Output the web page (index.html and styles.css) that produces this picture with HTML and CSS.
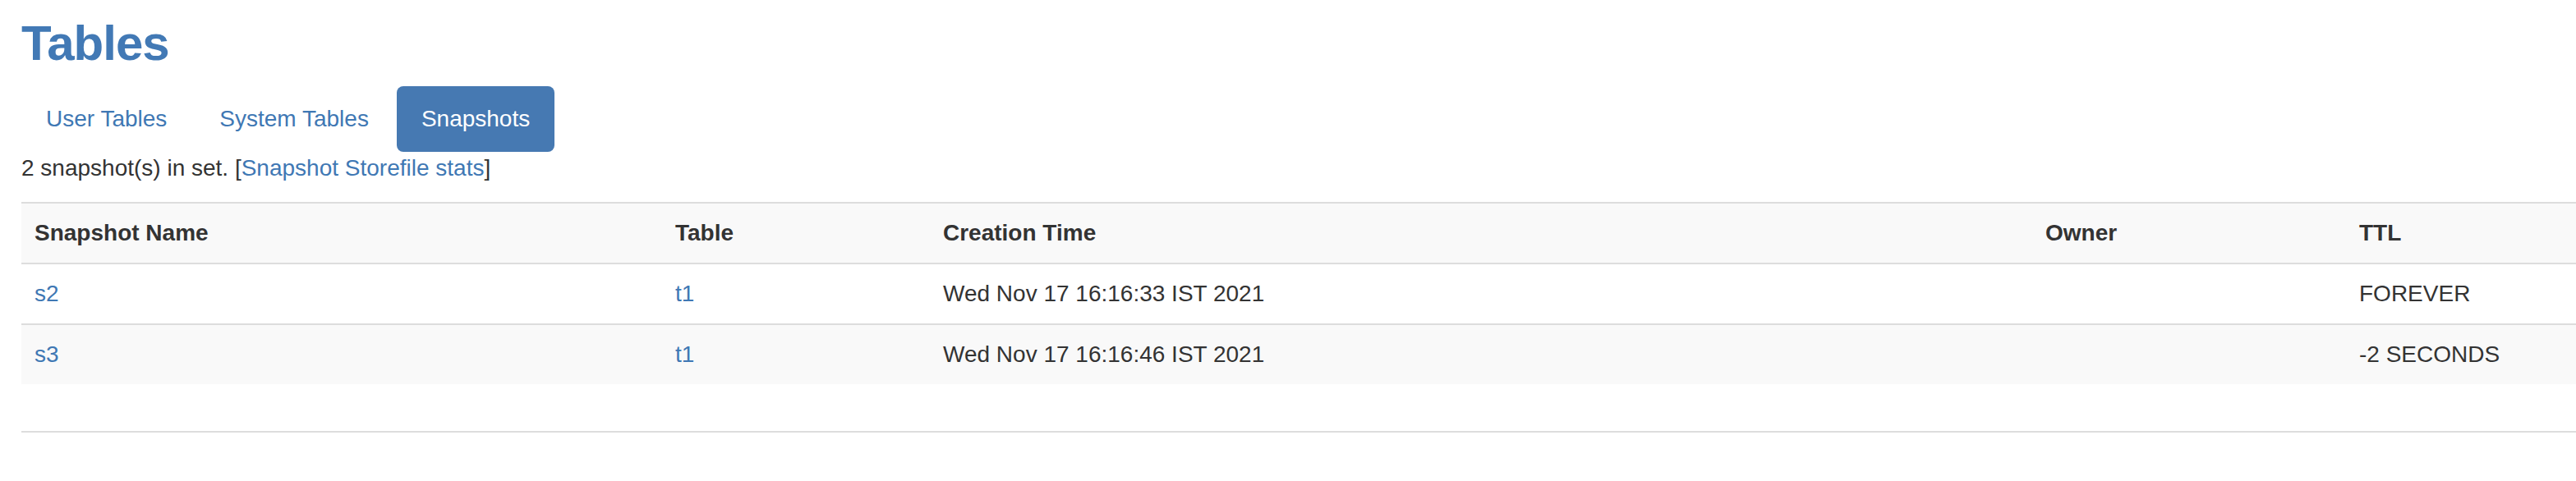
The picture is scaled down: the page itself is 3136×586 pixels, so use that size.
FILE: index.html
```html
<!DOCTYPE html>
<html>
<head>
<meta charset="utf-8">
<title>Tables</title>
<link rel="stylesheet" href="styles.css">
</head>
<body>
<section class="page">
  <h2 class="title">Tables</h2>
  <ul class="pills">
    <li><a href="#">User Tables</a></li>
    <li><a href="#">System Tables</a></li>
    <li class="active"><a href="#">Snapshots</a></li>
  </ul>
  <p class="summary">2 snapshot(s) in set. [<a href="#">Snapshot Storefile stats</a>]</p>
  <table class="snap-table">
    <colgroup>
      <col class="c1"><col class="c2"><col class="c3"><col class="c4"><col>
    </colgroup>
    <tbody>
      <tr>
        <th>Snapshot Name</th>
        <th>Table</th>
        <th>Creation Time</th>
        <th>Owner</th>
        <th>TTL</th>
      </tr>
      <tr>
        <td><a href="#">s2</a></td>
        <td><a href="#">t1</a></td>
        <td>Wed Nov 17 16:16:33 IST 2021</td>
        <td></td>
        <td>FOREVER</td>
      </tr>
      <tr>
        <td><a href="#">s3</a></td>
        <td><a href="#">t1</a></td>
        <td>Wed Nov 17 16:16:46 IST 2021</td>
        <td></td>
        <td>-2 SECONDS</td>
      </tr>
    </tbody>
  </table>
  <div class="rule"></div>
</section>
</body>
</html>
```

FILE: styles.css
```css
html, body {
  margin: 0;
  padding: 0;
  background: #fff;
  overflow: hidden;
}
body {
  font-family: "Liberation Sans", Arial, Helvetica, sans-serif;
  font-size: 28px;
  line-height: 40px;
  color: #333;
}
a {
  color: #3f78b4;
  text-decoration: none;
}
.page {
  padding: 0 0 0 26px;
}
.title {
  margin: 20px 0 19px 0;
  font-size: 60px;
  line-height: 66px;
  font-weight: bold;
  letter-spacing: -1px;
  color: #4279b5;
}
.pills {
  display: flex;
  list-style: none;
  margin: 0;
  padding: 0;
}
.pills li + li {
  margin-left: 4px;
}
.pills a {
  display: block;
  padding: 20px 30px;
  border-radius: 8px;
  line-height: 40px;
}
.pills .active a {
  background: #4679b2;
  color: #fff;
}
.summary {
  margin: 0 0 21px 0;
}
.snap-table {
  width: 100%;
  table-layout: fixed;
  border-collapse: collapse;
  border-spacing: 0;
}
.c1 { width: 780px; }
.c2 { width: 326px; }
.c3 { width: 1342px; }
.c4 { width: 382px; }
.snap-table th,
.snap-table td {
  padding: 16px;
  line-height: 40px;
  text-align: left;
  vertical-align: top;
  border-top: 2px solid #dddddd;
}
.snap-table th {
  font-weight: bold;
}
.snap-table tr:nth-child(odd) {
  background: #f9f9f9;
}
.rule {
  margin-top: 57px;
  border-top: 2px solid #dddddd;
}
```
